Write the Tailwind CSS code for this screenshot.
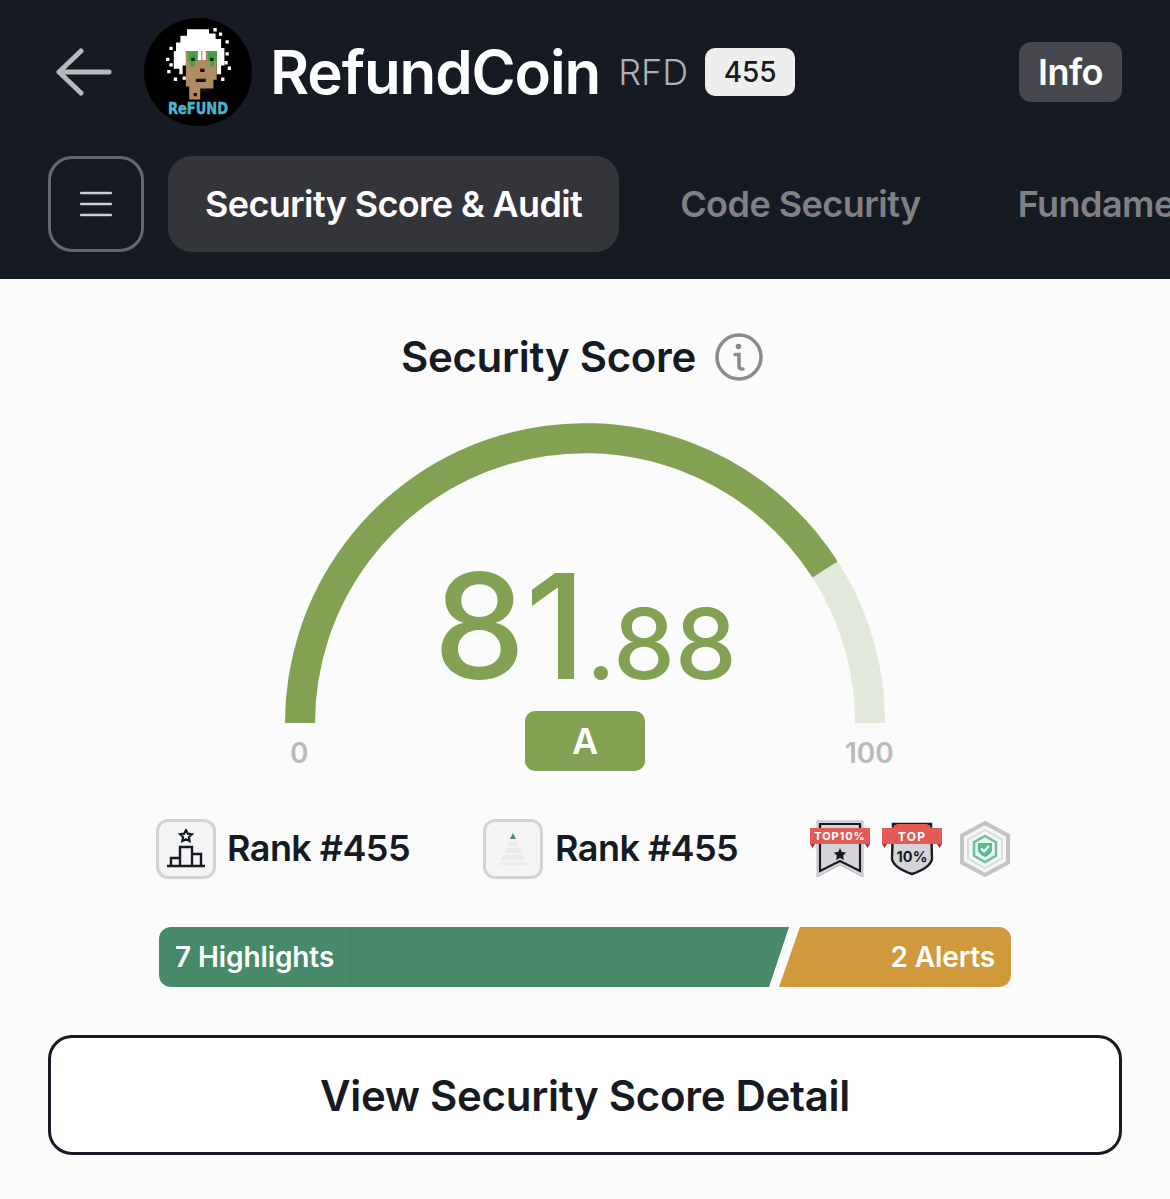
<!DOCTYPE html>
<html lang="en">
<head>
    <meta charset="UTF-8">
    <meta name="viewport" content="width=device-width, initial-scale=1.0">
    <title>RefundCoin - Security Score</title>
    <script src="https://cdn.jsdelivr.net/npm/@tailwindcss/browser@4"></script>
</head>
<body class="bg-[#fbfbfb] font-['Inter',sans-serif] text-[#161a23] w-[1170px] h-[1199px] overflow-hidden">
    <!-- Header -->
    <header class="bg-[#161a23] h-[279px] pt-[18px] overflow-hidden">
        <div class="flex items-center h-[108px] pl-[56px] pr-[48px]">
            <svg class="w-[56px] h-[48px] shrink-0" viewBox="0 0 56 48" fill="none" stroke="#b9b9bd" stroke-width="5" stroke-linecap="round" stroke-linejoin="round">
                <path d="M53 24H3M25 3L3 24l22 21"/>
            </svg>
            <!-- Avatar -->
            <svg class="w-[108px] h-[108px] ml-[32px] shrink-0" viewBox="0 0 108 108">
                <circle cx="54" cy="54" r="54" fill="#000"/>
                <g transform="translate(54 42) scale(1.1) translate(-54 -42)">
                    <path fill="#fff" d="M44 14h20v4h6v5h5v8h3v16h-3v8h-4V34H43v13h-3v8h-3v-5h-5V34h2v-8h4v-6h6z"/>
                    <path fill="#fff" d="M68 13h3v3h-3zM73 17h3v3h-3zM79 24h3v3h-3zM79 35h3v3h-3zM78 43h3v3h-3zM81 48h3v3h-3zM75 58h3v3h-3zM28 30h3v3h-3zM25 40h3v3h-3zM28 45h3v3h-3zM26 51h3v3h-3zM32 58h3v3h-3zM40 57h3v3h-3z"/>
                    <path fill="#b08a62" d="M43 34h28v26h-3v8h-6v3H56v7H46V66h-3z"/>
                    <path fill="#3fa53f" d="M45 35h8v8h-2v5h-4v-5h-2zM63 35h8v8h-2v5h-4v-5h-2z"/>
                    <path fill="#111" d="M48 40h3v3h-3zM65 40h3v3h-3zM56 50h4v3h-4zM52 59h9v3h-9zM50 72h3v3h-3zM56 68h8v3h-8z"/>
                    <path fill="#fff" d="M54 24h3v18h-3zM58 30h3v12h-3z"/>
                </g>
                <text x="54" y="96" text-anchor="middle" font-family="'DejaVu Sans',sans-serif" font-weight="700" font-size="15" fill="#4fb3d0" stroke="#4fb3d0" stroke-width="0.5" textLength="60" lengthAdjust="spacingAndGlyphs">ReFUND</text>
            </svg>
            <h1 class="ml-[18px] text-[60px] leading-none font-semibold tracking-[-1.1px] text-white">RefundCoin</h1>
            <span class="ml-[18px] text-[36px] leading-none font-light text-[#aeaeb4]">RFD</span>
            <span class="ml-[17px] w-[90px] h-[48px] flex items-center justify-center rounded-[10px] bg-[#eeeeee] text-[28px] font-medium">455</span>
            <button class="ml-auto w-[103px] h-[60px] rounded-[12px] bg-[#46474c] text-white text-[36px] font-semibold tracking-[-0.5px]">Info</button>
        </div>
        <nav class="flex items-center mt-[30px] pl-[48px] whitespace-nowrap">
            <button class="w-[96px] h-[96px] shrink-0 rounded-[24px] border-[3px] border-[#67686f] flex items-center justify-center">
                <svg class="w-[32px] h-[26px]" viewBox="0 0 32 26" fill="none" stroke="#d0d0d3" stroke-width="2.5" stroke-linecap="round"><path d="M1 2h30M1 13h30M1 24h30"/></svg>
            </button>
            <a class="ml-[24px] h-[96px] px-[37px] flex items-center shrink-0 rounded-[24px] bg-[#34353b] text-white text-[36px] font-semibold tracking-[-0.65px]">Security Score &amp; Audit</a>
            <a class="ml-[61px] text-[36px] font-semibold tracking-[-0.55px] text-[#808186] shrink-0">Code Security</a>
            <a class="ml-[97px] text-[36px] font-semibold tracking-[-0.55px] text-[#808186] shrink-0">Fundamentals</a>
        </nav>
    </header>

    <main class="flex flex-col items-center">
        <div class="flex items-center mt-[54px] h-[48px] ml-[-6px]">
            <h2 class="text-[42px] leading-none font-semibold tracking-[-0.3px]">Security Score</h2>
            <svg class="ml-[19px] w-[48px] h-[48px]" viewBox="0 0 48 48" fill="none" stroke="#8a8b90" stroke-width="3.5">
                <circle cx="24" cy="24" r="22"/>
                <path stroke-width="3.5" stroke-linecap="round" d="M20 21.500h4V33q0 3 3 3h1"/>
                <circle cx="23.500" cy="13.500" r="2.800" fill="#8a8b90" stroke="none"/>
            </svg>
        </div>

        <!-- Gauge -->
        <div class="relative w-[620px] h-[350px] mt-[42px]">
            <svg class="absolute left-[10px] top-0 w-[600px] h-[300px]" viewBox="0 0 600 300" fill="none" stroke-width="30">
                <path stroke="#e2e8da" d="M15 300A285 285 0 0 1 585 300"/>
                <path stroke="#82a153" d="M15 300A285 285 0 0 1 540 146.500"/>
            </svg>
            <div class="absolute inset-x-0 top-[130px] flex justify-center items-baseline text-[#82a153] font-medium leading-none">
                <span class="text-[146px] leading-none">81</span><span class="text-[98px] leading-none">.88</span>
            </div>
            <div class="absolute left-[250px] top-[288px] w-[120px] h-[60px] rounded-[10px] bg-[#82a153] text-white text-[36px] font-semibold flex items-center justify-center">A</div>
            <span class="absolute left-[15px] top-[316px] text-[28px] leading-none font-semibold text-[#b9babd]">0</span>
            <span class="absolute left-[570px] top-[316px] text-[28px] leading-none font-semibold text-[#b9babd]">100</span>
        </div>

        <!-- Ranks and badges -->
        <div class="flex items-center w-[855px] h-[60px] mt-[46px] ml-[-3px]">
            <div class="w-[60px] h-[60px] rounded-[12px] border-[3px] border-[#d3d3d5] bg-[#f4f4f5] flex items-center justify-center shrink-0">
                <svg class="w-[40px] h-[40px]" viewBox="0 0 40 40" fill="none" stroke="#161a23" stroke-width="2.400">
                    <path stroke-width="2.200" d="M20 1l1.800 3.700 4 .6-2.900 2.800.7 4-3.600-1.900-3.600 1.900.7-4-2.900-2.800 4-.6z"/>
                    <path d="M1 37h38M5 37v-8h9M14 37V18h12v19M26 25h9v12"/>
                </svg>
            </div>
            <span class="ml-[11px] mb-[2px] text-[36px] font-semibold tracking-[-0.55px] leading-none">Rank #455</span>
            <div class="ml-[73px] w-[60px] h-[60px] rounded-[12px] border-[3px] border-[#d3d3d5] bg-[#f4f4f5] flex items-center justify-center shrink-0">
                <svg class="w-[36px] h-[34px]" viewBox="0 0 36 34">
                    <path fill="#4a8a6b" d="M18 1l3 6h-6z"/>
                    <path fill="#ebebec" d="M14 9h8l2 5H12zM11 16h14l2 5H9zM8 23h20l2 5H6zM5 30h26l1 3H4z"/>
                </svg>
            </div>
            <span class="ml-[12px] mb-[2px] text-[36px] font-semibold tracking-[-0.55px] leading-none">Rank #455</span>
            <div class="ml-auto flex items-center">
                <svg class="w-[60px] h-[60px]" viewBox="0 0 60 60">
                    <path fill="#d5d5d9" stroke="#b9babd" stroke-width="1" d="M7 2h46v56L30 46 7 58z"/>
                    <path fill="none" stroke="#161a23" stroke-width="2.200" d="M10 5h40v47L30 42 10 52z"/>
                    <path fill="#a93a35" d="M0 25l2.500 4 2.500-4zM55 25l2.500 4 2.500-4z"/>
                    <rect y="9" width="60" height="16" fill="#e25c55"/>
                    <text x="30" y="21" text-anchor="middle" font-family="Inter,sans-serif" font-weight="700" font-size="11" letter-spacing="0.9" fill="#fff">TOP10%</text>
                    <path fill="#161a23" d="M30 29l1.900 4 4.400.6-3.200 3 .8 4.400-3.900-2.100-3.900 2.100.8-4.400-3.200-3 4.400-.6z"/>
                </svg>
                <svg class="w-[60px] h-[60px] ml-[12px]" viewBox="0 0 60 60">
                    <path fill="#d5d5d9" stroke="#161a23" stroke-width="2.400" d="M11 5h38l1 35q-2 9-20 15Q12 49 10 40z"/>
                    <path fill="#a93a35" d="M0 25l2.500 4 2.500-4zM55 25l2.500 4 2.500-4z"/>
                    <path fill="#e25c55" d="M0 9h10l5-4h30l5 4h10v16H0z"/>
                    <text x="30" y="21.500" text-anchor="middle" font-family="Inter,sans-serif" font-weight="700" font-size="12" letter-spacing="1.200" fill="#fff">TOP</text>
                    <text x="30" y="43" text-anchor="middle" font-family="Inter,sans-serif" font-weight="700" font-size="14.500" fill="#161a23">10%</text>
                </svg>
                <svg class="w-[52px] h-[58px] ml-[17px]" viewBox="0 0 52 58" fill="none">
                    <path stroke="#c4c4c6" stroke-width="4" fill="#f6f6f6" d="M26 3l23 12.500v27L26 55 3 42.500v-27z"/>
                    <path stroke="#dcdcdd" stroke-width="2" d="M26 10l17 9.500v19L26 48 9 38.500v-19z"/>
                    <path stroke="#6cc09a" stroke-width="2.500" fill="#eaf5ef" d="M26 16l11 6.200v13.600L26 42l-11-6.200V22.200z"/>
                    <path fill="#5dba8d" d="M19 23h14v8q-2 4-7 6-5-2-7-6z"/>
                    <path stroke="#fff" stroke-width="2.200" d="M22 28.500l3 3 5-5.500"/>
                </svg>
            </div>
        </div>

        <!-- Highlights / alerts bar -->
        <div class="flex w-[852px] h-[60px] mt-[48px] rounded-[12px] overflow-hidden text-white text-[28px] font-semibold tracking-[-0.1px] leading-none">
            <div class="w-[630px] bg-[#478a6a] [clip-path:polygon(0_0,100%_0,610px_100%,0_100%)]">
                <div class="w-[192px] h-full pl-[16px] flex items-center border-r border-[#3f8061]">7 Highlights</div>
            </div>
            <div class="flex-1 ml-[-10px] bg-[#d09a3c] pr-[16px] flex items-center justify-end [clip-path:polygon(21px_0,100%_0,100%_100%,0_100%)]">2 Alerts</div>
        </div>

        <button class="w-[1074px] h-[120px] mt-[48px] rounded-[24px] border-[3px] border-[#161a23] bg-white text-[42px] font-semibold tracking-[-0.3px]">View Security Score Detail</button>
    </main>
</body>
</html>
